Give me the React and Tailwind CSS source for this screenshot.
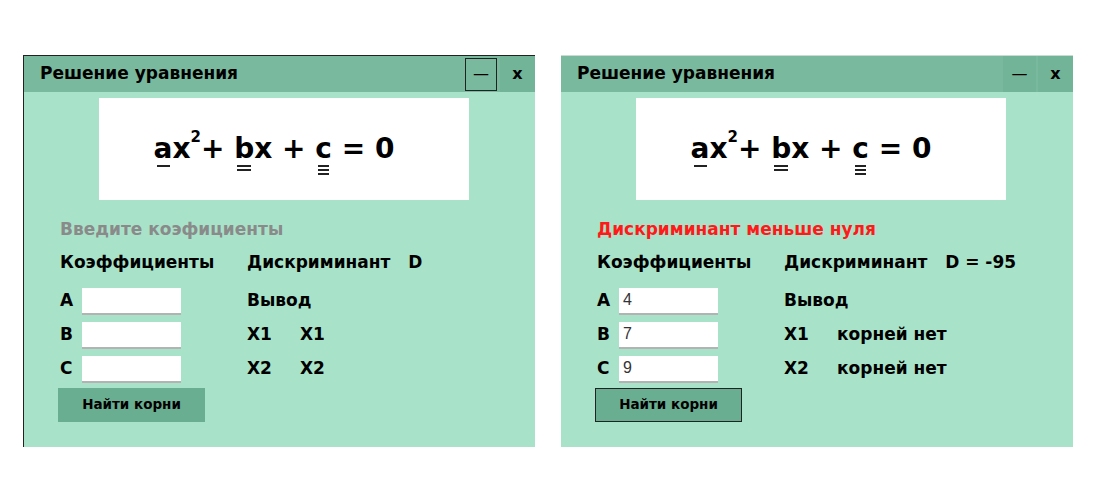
import React from 'react';

const font = { fontFamily: '"DejaVu Sans", Verdana, sans-serif' };

const Marks = ({ count }) => (
  <span className="absolute left-[3px] right-[3px] top-full flex flex-col gap-[2px] mt-[2px]">
    {Array.from({ length: count }).map((_, i) => (
      <span key={i} className="block h-[2px] bg-[#222]" />
    ))}
  </span>
);

const Equation = () => (
  <div className="ml-[75px] mt-[6px] w-[370px] h-[102px] bg-white flex items-center justify-center pr-[20px]">
    <div className="text-[28px] font-bold text-black leading-none flex items-baseline" style={font}>
      <span className="relative inline-block">a<Marks count={1} /></span>
      <span>x</span>
      <span className="text-[15px] relative -top-[16px]">2</span>
      <span>+&nbsp;</span>
      <span className="relative inline-block">b<Marks count={2} /></span>
      <span>x&nbsp;+&nbsp;</span>
      <span className="relative inline-block">c<Marks count={3} /></span>
      <span>&nbsp;= 0</span>
    </div>
  </div>
);

const Window = ({ active, status, statusColor, d, a, b, c, x1, x2 }) => (
  <div
    className={`w-[512px] h-[392px] flex flex-col bg-[#a8e3c9] ${
      active ? 'border-l border-t border-[#222]' : 'border-t border-[#c9dcd2]'
    }`}
    style={font}
  >
    <div className="h-[36px] bg-[#79b99d] flex items-center pl-[16px]">
      <span className="text-[17px] font-bold text-black flex-1">Решение уравнения</span>
      {active ? (
        <div className="w-[32px] h-[33px] border border-[#222] flex items-center justify-center text-[16px] mr-[3px]">—</div>
      ) : (
        <div className="w-[33px] h-[36px] bg-[#72b497] flex items-center justify-center text-[16px] mr-[2px]">—</div>
      )}
      <div className="w-[35px] h-[36px] bg-[#72b497] flex items-center justify-center text-[16px] font-bold">x</div>
    </div>

    <Equation />

    <div className="pl-[36px] pt-[17px]">
      <div className={`text-[17px] font-bold ${statusColor} h-[22px]`}>{status}</div>

      <div className="flex mt-[11px] text-[17px] font-bold text-black">
        <div className="w-[187px]">Коэффициенты</div>
        <div>Дискриминант&nbsp;&nbsp;&nbsp;{d}</div>
      </div>

      <div className="flex mt-[12px]">
        <div className="w-[187px] flex flex-col gap-[7px]">
          {[['A', a], ['B', b], ['C', c]].map(([l, v]) => (
            <div key={l} className="flex items-center h-[27px]">
              <span className="w-[22px] text-[17px] font-bold text-black">{l}</span>
              <div
                className="w-[99px] h-[27px] bg-white border-b-2 border-[#b3b3b3] flex items-center pl-[4px] text-[16px] text-[#333]"
                style={{ fontFamily: '"Liberation Sans", Arial, sans-serif' }}
              >
                {v}
              </div>
            </div>
          ))}
          <div
            className={`w-[147px] h-[34px] bg-[#6aae92] flex items-center justify-center text-[13.5px] font-bold text-black -ml-[2px] -mt-[2px] ${
              active ? '' : 'border border-[#222]'
            }`}
          >
            Найти корни
          </div>
        </div>
        <div className="flex flex-col text-[17px] font-bold text-black">
          <div className="h-[27px] flex items-center">Вывод</div>
          <div className="h-[33px] flex items-end">
            <span className="w-[53px]">X1</span>
            <span>{x1}</span>
          </div>
          <div className="h-[34px] flex items-end">
            <span className="w-[53px]">X2</span>
            <span>{x2}</span>
          </div>
        </div>
      </div>
    </div>
  </div>
);

export default function App() {
  return (
    <div className="w-[1100px] h-[503px] bg-white flex gap-[26px] pt-[55px] pl-[23px]">
      <Window
        active
        status="Введите коэфициенты"
        statusColor="text-[#8a8a8a]"
        d="D"
        a=""
        b=""
        c=""
        x1="X1"
        x2="X2"
      />
      <Window
        status="Дискриминант меньше нуля"
        statusColor="text-[#ff1a1a]"
        d="D = -95"
        a="4"
        b="7"
        c="9"
        x1="корней нет"
        x2="корней нет"
      />
    </div>
  );
}
